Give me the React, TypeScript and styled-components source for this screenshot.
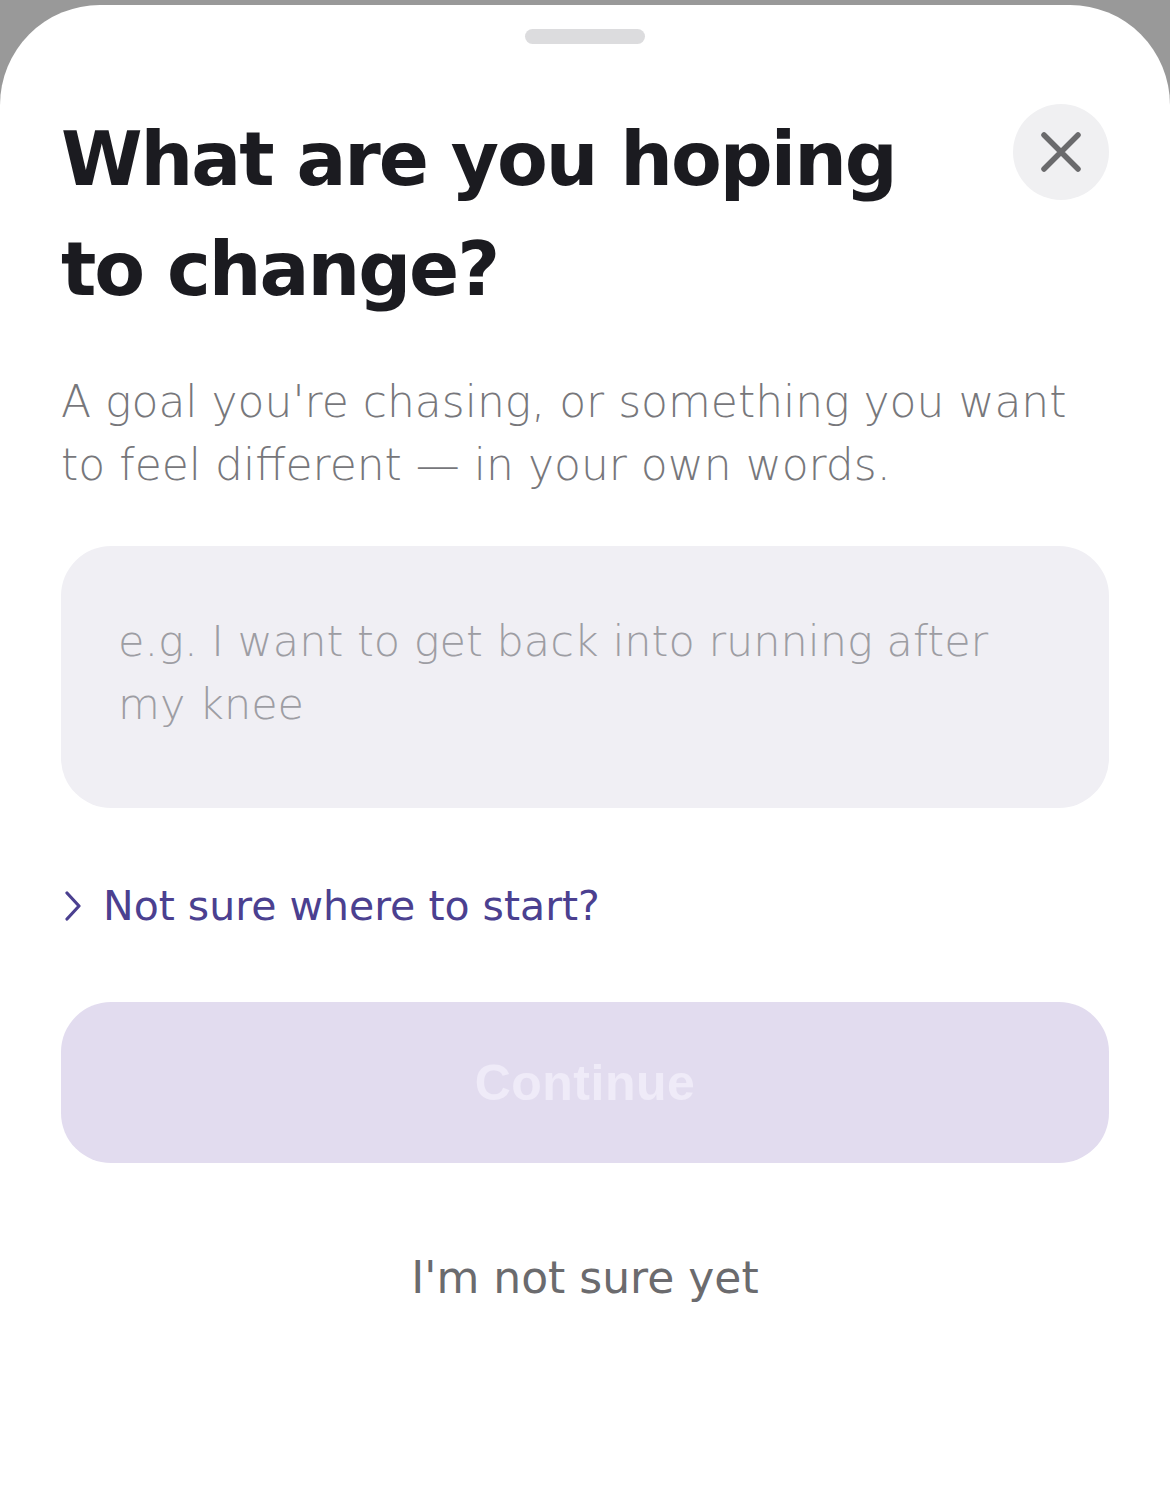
import React from "react";
import styled, { createGlobalStyle } from "styled-components";

const Global = createGlobalStyle`
  html, body { margin: 0; padding: 0; background: #999999; }
  body { font-family: "DejaVu Sans", "Noto Sans", sans-serif; }
  * { box-sizing: border-box; }
`;

const Sheet = styled.div`
  margin-top: 5px;
  min-height: 1488px;
  background: #ffffff;
  border-radius: 100px 100px 0 0;
  padding: 24px 61px 0 61px;
  display: flex;
  flex-direction: column;
`;

const Grabber = styled.div`
  align-self: center;
  width: 120px;
  height: 15px;
  border-radius: 8px;
  background: #dcdcde;
`;

const Header = styled.div`
  margin-top: 60px;
  display: flex;
  justify-content: space-between;
  align-items: flex-start;
`;

const Title = styled.h1`
  margin: 0;
  font-family: "DejaVu Sans", sans-serif;
  font-weight: 700;
  font-size: 74px;
  line-height: 110px;
  letter-spacing: -2px;
  color: #1b1b20;
`;

const CloseButton = styled.button`
  width: 96px;
  height: 96px;
  border-radius: 50%;
  border: none;
  background: #f0f0f2;
  display: flex;
  align-items: center;
  justify-content: center;
  padding: 0;
  flex-shrink: 0;
`;

const Subtitle = styled.p`
  margin: 46px 0 0 0;
  font-weight: 300;
  font-size: 44px;
  line-height: 63px;
  color: #77777b;
`;

const InputBox = styled.textarea`
  margin-top: 50px;
  height: 262px;
  width: 100%;
  border: none;
  outline: none;
  resize: none;
  border-radius: 50px;
  background: #f0eff4;
  padding: 64px 57px 0 57px;
  font-family: "DejaVu Sans", sans-serif;
  font-weight: 300;
  font-size: 43px;
  line-height: 63px;
  color: #333;
  &::placeholder { color: #9d9da3; }
`;

const HelpLink = styled.button`
  margin-top: 68px;
  align-self: flex-start;
  display: flex;
  align-items: center;
  gap: 22px;
  background: none;
  border: none;
  padding: 0 0 0 4px;
  font-family: "DejaVu Sans", sans-serif;
  font-weight: 500;
  font-size: 41px;
  line-height: 60px;
  color: #4b4090;
`;

const PrimaryButton = styled.button`
  margin-top: 66px;
  height: 161px;
  width: 100%;
  border: none;
  border-radius: 50px;
  background: #e2dcef;
  color: #efebf8;
  font-family: "Liberation Sans", Arial, sans-serif;
  font-weight: 700;
  font-size: 50px;
  letter-spacing: 0.5px;
`;

const SecondaryButton = styled.button`
  margin-top: 85px;
  align-self: center;
  background: none;
  border: none;
  padding: 0;
  font-family: "DejaVu Sans", sans-serif;
  font-weight: 500;
  font-size: 44px;
  line-height: 60px;
  color: #6b6b6e;
`;

export default function App() {
  return (
    <>
      <Global />
      <Sheet>
        <Grabber />
        <Header>
          <Title>
            What are you hoping
            <br />
            to change?
          </Title>
          <CloseButton aria-label="Close">
            <svg width="40" height="40" viewBox="0 0 40 40">
              <path d="M3 3 L37 37 M37 3 L3 37" stroke="#6a6a6c" strokeWidth="5.5" strokeLinecap="round" />
            </svg>
          </CloseButton>
        </Header>
        <Subtitle>
          A goal you're chasing, or something you want
          <br />
          to feel different — in your own words.
        </Subtitle>
        <InputBox placeholder="e.g. I want to get back into running after my knee" />
        <HelpLink>
          <svg width="16" height="30" viewBox="0 0 16 30">
            <path d="M2 2 L14 15 L2 28" fill="none" stroke="#4b4090" strokeWidth="3.2" strokeLinecap="round" strokeLinejoin="round" />
          </svg>
          Not sure where to start?
        </HelpLink>
        <PrimaryButton>Continue</PrimaryButton>
        <SecondaryButton>I'm not sure yet</SecondaryButton>
      </Sheet>
    </>
  );
}
